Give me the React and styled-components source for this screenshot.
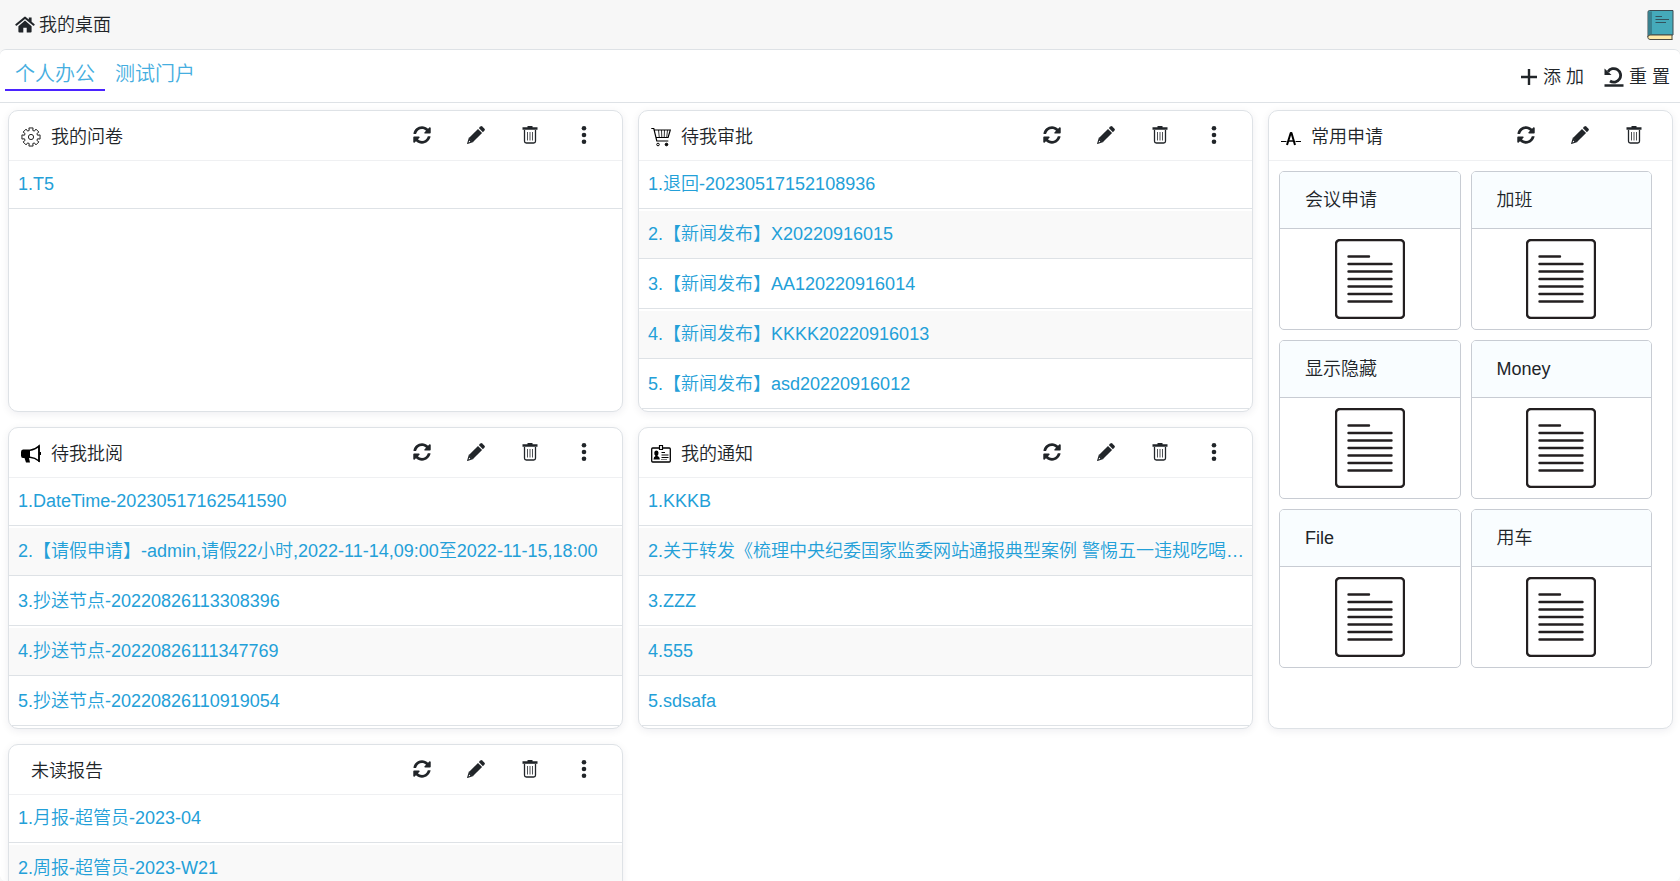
import React from "react";
import styled, { createGlobalStyle } from "styled-components";
import { FaSyncAlt } from "react-icons/fa";

const surveys = ["1.T5"];

const approvals = [
  "1.退回-20230517152108936",
  "2.【新闻发布】X20220916015",
  "3.【新闻发布】AA120220916014",
  "4.【新闻发布】KKKK20220916013",
  "5.【新闻发布】asd20220916012",
];

const reviews = [
  "1.DateTime-20230517162541590",
  "2.【请假申请】-admin,请假22小时,2022-11-14,09:00至2022-11-15,18:00",
  "3.抄送节点-20220826113308396",
  "4.抄送节点-20220826111347769",
  "5.抄送节点-20220826110919054",
];

const notices = [
  "1.KKKB",
  "2.关于转发《梳理中央纪委国家监委网站通报典型案例 警惕五一违规吃喝…",
  "3.ZZZ",
  "4.555",
  "5.sdsafa",
];

const reports = ["1.月报-超管员-2023-04", "2.周报-超管员-2023-W21"];

const forms = ["会议申请", "加班", "显示隐藏", "Money", "File", "用车"];

// outline of an eight-toothed cog around (10, 10)
const cogPoints = [0, 45, 90, 135, 180, 225, 270, 315]
  .flatMap((angle) => [[-15, 6.8], [-13, 9.3], [13, 9.3], [15, 6.8]].map(([turn, radius]) => {
    const rad = ((angle + turn) * Math.PI) / 180;
    return `${(10 + radius * Math.sin(rad)).toFixed(2)},${(10 - radius * Math.cos(rad)).toFixed(2)}`;
  }))
  .join(" ");

function HomeIcon() {
  return (
    <svg width="20" height="18" viewBox="0 0 20 18" fill="currentColor" aria-hidden="true">
      <path d="M10 4.6 3.4 10.2V15.6q0 .9.9.9H8.300V11.800h3.400v4.700h4q.9 0 .9-.9V10.200z" />
      <path d="M9.200.9q.8-.6 1.600 0L13.800 3.400V1.600h2.800v4.200l3 2.500q.3.300 0 .6l-.7.800q-.3.300-.6 0L10 2.900 1.700 9.700q-.3.300-.6 0l-.7-.8q-.3-.3 0-.6z" />
    </svg>
  );
}

function BookIcon() {
  return (
    <svg width="27" height="30" viewBox="0 0 27 30" aria-hidden="true">
      <path d="M1 2q0-1.500 1.500-1.500h23.500v24.500H3q-2 0-2 2z" fill="#45aaba" stroke="#3b4a50" />
      <path d="M1.500 1.500h3.500v23.500h-3.500z" fill="#38818f" />
      <path d="M25 25H3q-2.200.2-2.200 2.200T3 29.500h22.500M25 25v4.500" fill="#ffeaa8" stroke="#4d4c43" />
      <path d="M8.500 6.500h6.500M8.500 9.500H22M8.500 12.500h10.500" stroke="#34535d" fill="none" />
    </svg>
  );
}

function PlusIcon() {
  return (
    <svg width="18" height="18" viewBox="0 0 18 18" fill="none" stroke="currentColor" strokeWidth="2.400" aria-hidden="true">
      <path d="M1 9h16M9 1v16" />
    </svg>
  );
}

function ResetIcon() {
  return (
    <svg width="20" height="20" viewBox="0 0 20 20" fill="none" stroke="currentColor" aria-hidden="true">
      <path d="M4 4.800A6.800 6.800 0 1 1 6 14" strokeWidth="2.800" />
      <path d="M.5 1.500v6.500H7.500z" fill="currentColor" stroke="none" />
      <path d="M.5 18.500h19" strokeWidth="2.600" />
    </svg>
  );
}

function PencilIcon() {
  return (
    <svg width="18" height="18" viewBox="0 0 18 18" fill="currentColor" aria-hidden="true">
      <path d="M11 2.900 15.100 7 6 16.100 1.900 12z" />
      <path d="M1.900 11.500 6.500 16.100.5 17.900q-.5 0-.4-.5zM2.200 14.600l-.6 1.800 1.800-.6z" fillRule="evenodd" />
      <path d="M11.800 2.100 13.400.5q.9-.8 1.800 0l2.300 2.300q.8.900 0 1.800l-1.600 1.600z" />
    </svg>
  );
}

function TrashIcon() {
  return (
    <svg width="16" height="18" viewBox="0 0 16 18" fill="none" stroke="currentColor" aria-hidden="true">
      <path d="M.5 2.500h15" strokeWidth="2.600" />
      <path d="M5.500 1h5" strokeWidth="2" />
      <path d="M2.500 4v11.200q0 1.800 1.800 1.800h7.400q1.800 0 1.800-1.800V4" strokeWidth="1.300" />
      <path d="M5.500 6v8.500M8 6v8.500M10.500 6v8.500" strokeWidth=".8" />
    </svg>
  );
}

function DotsIcon() {
  return (
    <svg width="6" height="20" viewBox="0 0 6 20" fill="currentColor" aria-hidden="true">
      <circle cx="3" cy="3.300" r="2.300" />
      <circle cx="3" cy="10" r="2.300" />
      <circle cx="3" cy="16.700" r="2.300" />
    </svg>
  );
}

function GearIcon() {
  return (
    <svg width="20" height="20" viewBox="0 0 20 20" fill="none" stroke="#222" aria-hidden="true">
      <polygon points={cogPoints} strokeLinejoin="round" />
      <circle cx="10" cy="10" r="2.600" />
    </svg>
  );
}

function CartIcon() {
  return (
    <svg width="20" height="20" viewBox="0 0 20 20" fill="none" stroke="#000" aria-hidden="true">
      <path d="M.3 1.500h2.500l3 12.500h11.500M3.300 3h16l-2.200 7.500H5.200" strokeWidth="1.200" />
      <path d="M7.500 3l.8 7.500M10.500 3l.3 7.500M13.500 3l-.3 7.500M16.500 3l-.8 7.500" strokeWidth=".8" />
      <circle cx="7" cy="17.500" r="1.300" />
      <circle cx="15.500" cy="17.500" r="1.300" fill="#000" />
    </svg>
  );
}

function HornIcon() {
  return (
    <svg width="20" height="20" viewBox="0 0 20 20" aria-hidden="true">
      <path d="M2 5.500h7V14H8l1 4.500H5L3.500 14H2Q0 14 0 11.500V8q0-2.500 2-2.500z" fill="#000" />
      <path d="M9 6.200q5-.5 9-4.200v15q-4-3.300-9-3.700" fill="none" stroke="#000" strokeWidth="1.500" />
      <path d="M18 1.500v16.500M19.300 8v3" stroke="#000" strokeWidth="1.500" />
    </svg>
  );
}

function BadgeIcon() {
  return (
    <svg width="20" height="20" viewBox="0 0 20 20" fill="none" stroke="#000" aria-hidden="true">
      <rect x=".7" y="4" width="18.600" height="14" rx="1" strokeWidth="1.300" />
      <path d="M8.500 5.500V1.500h3v4z" fill="#fff" strokeWidth="1.200" />
      <path d="M2.500 15.500q0-3 2-3.500Q3 10.500 3.300 8.500q.2-2 2.100-2T7.500 8.500q.2 2-1.200 3.500 2.500.5 2.500 3.500z" fill="#000" stroke="none" />
      <path d="M10.500 8.500h3.500M10.500 11h7M10.500 13.500h7" />
      <path d="M10.500 15.500h6" strokeDasharray="1 1" />
    </svg>
  );
}

function PulseIcon() {
  return (
    <svg width="20" height="20" viewBox="0 0 20 20" fill="none" stroke="#000" aria-hidden="true">
      <path d="M0 14.500h5.500M14.500 14.500H20" strokeWidth="1.200" />
      <path d="M6 18l3.700-12h.8L14 18" strokeWidth="2" strokeLinejoin="round" />
      <path d="M7.500 14h5" strokeWidth="1.500" />
    </svg>
  );
}

function DocumentIcon() {
  return (
    <svg width="70" height="80" viewBox="0 0 70 80" fill="none" stroke="#231f20" strokeWidth="2.400" aria-hidden="true">
      <rect x="1" y="1" width="68" height="78" rx="4" />
      <path d="M13.500 17.500h20.500M13.500 25h43M13.500 32.500h43M13.500 40h43M13.500 47.500h43M13.500 55h43M13.500 62.500h43" strokeLinecap="round" />
    </svg>
  );
}

function Card({ title, icon, items, tall, children }) {
  return (
    <CardBox $tall={tall}>
      <CardHeader>
        <CardTitle>
          {icon}
          <span>{title}</span>
        </CardTitle>
        <Actions>
          <IconButton type="button" aria-label="刷新"><FaSyncAlt size={18} /></IconButton>
          <IconButton type="button" aria-label="编辑"><PencilIcon /></IconButton>
          <IconButton type="button" aria-label="删除"><TrashIcon /></IconButton>
          {!tall && <IconButton type="button" aria-label="更多"><DotsIcon /></IconButton>}
        </Actions>
      </CardHeader>
      {items && (
        <List>
          {items.map((item) => (
            <Row key={item}>
              <RowLink href="#">{item}</RowLink>
            </Row>
          ))}
        </List>
      )}
      {children}
    </CardBox>
  );
}

function App() {
  return (
    <Page>
      <GlobalStyle />
      <Header>
        <PageTitle><HomeIcon />我的桌面</PageTitle>
        <BookButton type="button" aria-label="帮助"><BookIcon /></BookButton>
      </Header>
      <Content>
        <Toolbar>
          <Tabs>
            <Tab href="#" $active>个人办公</Tab>
            <Tab href="#">测试门户</Tab>
          </Tabs>
          <Tools>
            <ToolButton type="button"><PlusIcon />添 加</ToolButton>
            <ToolButton type="button"><ResetIcon />重 置</ToolButton>
          </Tools>
        </Toolbar>
        <Board>
          <Card title="我的问卷" icon={<GearIcon />} items={surveys} />
          <Card title="待我审批" icon={<CartIcon />} items={approvals} />
          <Card title="常用申请" icon={<PulseIcon />} tall>
            <FormGrid>
              {forms.map((name) => (
                <FormTile href="#" key={name}>
                  <FormName>{name}</FormName>
                  <FormPicture><DocumentIcon /></FormPicture>
                </FormTile>
              ))}
            </FormGrid>
          </Card>
          <Card title="待我批阅" icon={<HornIcon />} items={reviews} />
          <Card title="我的通知" icon={<BadgeIcon />} items={notices} />
          <Card title="未读报告" items={reports} />
        </Board>
      </Content>
    </Page>
  );
}

const GlobalStyle = createGlobalStyle`
  * {
    box-sizing: border-box;
  }
  body {
    margin: 0;
    background: #f7f7f7;
    color: #212529;
    font-family: "Liberation Sans", "Noto Sans CJK SC", sans-serif;
    font-size: 18px;
    font-weight: 350;
    line-height: 24px;
  }
  button {
    padding: 0;
    border: 0;
    background: none;
    color: inherit;
    font: inherit;
    cursor: pointer;
  }
  a {
    text-decoration: none;
  }
  svg {
    display: block;
    flex: none;
  }
`;

const Page = styled.div`
  height: 100vh;
  display: flex;
  flex-direction: column;
  overflow: hidden;
`;

const Header = styled.header`
  flex: none;
  height: 49px;
  padding: 0 6px 0 15px;
  display: flex;
  justify-content: space-between;
  align-items: center;
`;

const PageTitle = styled.div`
  display: flex;
  align-items: center;
  gap: 4px;
`;

const BookButton = styled.button`
  width: 27px;
  height: 30px;
`;

const Content = styled.main`
  flex: 1;
  min-height: 0;
  overflow: hidden;
  background: #fff;
  border-top: 1px solid #dee2e6;
  border-radius: 6px;
`;

const Toolbar = styled.div`
  height: 53px;
  padding: 0 10px 0 5px;
  display: flex;
  justify-content: space-between;
  border-bottom: 1px solid #dee2e6;
`;

const Tabs = styled.nav`
  display: flex;
`;

const Tab = styled.a`
  height: 41px;
  padding: 9px 10px 0;
  font-size: 20px;
  line-height: 30px;
  color: #45aee0;
  border-bottom: 2px solid ${(props) => (props.$active ? "#4b23ff" : "transparent")};
`;

const Tools = styled.div`
  display: flex;
  align-items: center;
  gap: 20px;
  padding-top: 2px;
`;

const ToolButton = styled.button`
  display: flex;
  align-items: center;
  gap: 5px;
`;

const Board = styled.div`
  display: grid;
  grid-template-columns: repeat(8, 1fr);
  grid-auto-rows: 302px;
  gap: 15px;
  padding: 7px 7px 15px 8px;
`;

const CardBox = styled.section`
  grid-column: span ${(props) => (props.$tall ? 2 : 3)};
  grid-row: span ${(props) => (props.$tall ? 2 : 1)};
  min-width: 0;
  overflow: hidden;
  background: #fff;
  border: 1px solid #dee2e6;
  border-radius: 10px;
  box-shadow: 0 2px 8px rgba(0, 20, 50, 0.07);
`;

const CardHeader = styled.header`
  height: 50px;
  padding: 2px 28px 0 12px;
  display: flex;
  justify-content: space-between;
  align-items: center;
  border-bottom: 1px solid #eff0f2;
`;

const CardTitle = styled.div`
  display: flex;
  align-items: center;

  span {
    padding-left: 10px;
  }
`;

const Actions = styled.div`
  display: flex;
  gap: 34px;
  padding-bottom: 3px;
`;

const IconButton = styled.button`
  width: 20px;
  height: 20px;
  display: flex;
  justify-content: center;
  align-items: center;
`;

const List = styled.ul`
  margin: 0;
  padding: 0;
  list-style: none;
  display: flex;
  flex-direction: column;
  gap: 2px;
`;

const Row = styled.li`
  height: 48px;
  border-bottom: 1px solid #dee2e6;

  &:nth-child(even) {
    background: #f9f9f9;
  }
`;

const RowLink = styled.a`
  display: block;
  padding: 0 5px 0 9px;
  line-height: 46px;
  color: #23a0d8;
  white-space: nowrap;
  overflow: hidden;
  text-overflow: ellipsis;
`;

const FormGrid = styled.div`
  display: grid;
  grid-template-columns: 1fr 1fr;
  gap: 10px;
  padding: 10px 20px 10px 10px;
`;

const FormTile = styled.a`
  overflow: hidden;
  color: inherit;
  border: 1px solid #c8ccd3;
  border-radius: 5px;
`;

const FormName = styled.div`
  height: 57px;
  padding: 0 25px;
  line-height: 56px;
  background: #f9fdff;
  border-bottom: 1px solid #c8ccd3;
`;

const FormPicture = styled.div`
  display: flex;
  justify-content: center;
  padding: 10px 0;
`;

export default App;
